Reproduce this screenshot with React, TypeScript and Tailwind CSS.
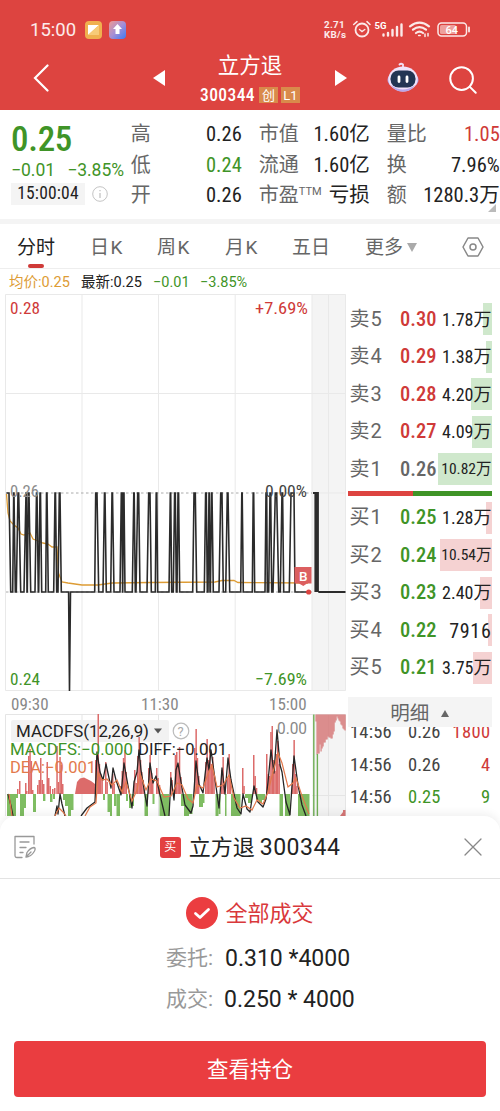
import React from "react";
import { Search } from "lucide-react";

type Tone = "red" | "green" | "gray" | "dark";

const tones: Record<Tone, string> = {
  red: "text-[#cf3a38]",
  green: "text-[#3f9427]",
  gray: "text-[#666]",
  dark: "text-[#222]",
};

const TOP = 493;
const BASE = 592;

// [base start, top start, top end, base end]
const spikes = [
  [12.7, 13.7, 14, 15.3], [16.3, 18, 18.7, 20.7], [24, 26, 26.3, 27],
  [27.3, 28.3, 29, 30.7], [35, 36.5, 37, 38.3], [38.7, 40, 40.5, 41.7],
  [45.7, 46.5, 47, 48.3], [53.7, 55, 55.5, 56.7], [58, 59.3, 60, 61.3],
];
const laterSpikes = [
  [94.7, 95.7, 97, 98.7], [103, 104.5, 105, 106.3], [110.7, 112, 112.5, 114],
  [120, 121.3, 122, 122.6], [122.7, 123.5, 124, 125], [132.3, 133.8, 134.2, 135.3],
  [136, 137.7, 138.7, 140], [147, 148.7, 150, 151.3], [155.3, 156.2, 156.8, 157.7],
  [169, 170.3, 170.7, 171.7], [173.3, 174.6, 175.3, 176.3], [177, 178, 178.6, 179.7],
  [192.7, 194, 195.3, 196.7], [204.3, 205.6, 206.3, 207.3], [208, 209, 209.3, 210],
  [210.4, 211.5, 212, 213.3], [219, 220.7, 222, 223.3], [225.7, 227.3, 228, 229.7],
  [240.7, 241.8, 242.2, 243.3], [252.3, 253.2, 253.7, 254.7], [265, 266, 266.7, 267.3],
  [268.7, 270, 270.7, 271.7], [273, 275.3, 276.7, 278.7], [280.3, 282, 282.6, 283.7],
  [289.3, 291, 294, 295],
];

const toPath = (list: number[][]) =>
  list.map(([a, b, c, d]) => `L${a} ${BASE}L${b} ${TOP}L${c} ${TOP}L${d} ${BASE}`).join("");

const pricePath =
  `M6.5 ${TOP}L9 ${TOP}L10.7 ${BASE}` +
  toPath(spikes) +
  `L68.6 ${BASE}L69.5 691L70.5 ${BASE}` +
  toPath(laterSpikes) +
  `L308 ${BASE}`;

function ChartText({ x, y, w, size = 17, fill, children }: {
  x: number; y: number; w: number; size?: number; fill: string; children: React.ReactNode;
}) {
  return (
    <text x={x} y={y} textLength={w} lengthAdjust="spacingAndGlyphs" fontSize={size} fill={fill}>
      {children}
    </text>
  );
}

function PriceChart() {
  return (
    <svg viewBox="0 294 346 397" className="block h-[397px] w-[346px]">
      <rect x="312" y="294" width="33.5" height="397" fill="#f4f4f4" />
      <g stroke="#e9e9e9" strokeWidth="1" fill="none">
        <path d="M5.5 294.5H345.5V690.5H5.5ZM82 294V691M158.5 294V691M235.2 294V691M312 294V691M328.5 294V691M6 393.5H345M312 493H345" />
      </g>
      <path d="M6 493H312M6 592H312" stroke="#aaa" strokeDasharray="2.5 2.5" />
      <ChartText x={10} y={314} w={30} fill="#cf3a38">0.28</ChartText>
      <ChartText x={255} y={314} w={53} fill="#cf3a38">+7.69%</ChartText>
      <ChartText x={10} y={685} w={30} fill="#3f9427">0.24</ChartText>
      <ChartText x={255} y={685} w={52} fill="#3f9427">−7.69%</ChartText>
      <path
        d="M6.5 494L8 513L10 521L14 525L18 528L21 534L24 535L30 533L33 539L38 541L43 543L48 544L52 547H57L58.5 573L62 582L68 583L82 585L98 585L112 583L150 582.5L215 582L222 580.5L234 580.5L238 582.5L308 583"
        fill="none"
        stroke="#dd9c35"
        strokeWidth="1.3"
      />
      <path d={pricePath} fill="none" stroke="#2b2b2b" strokeWidth="1.6" />
      <path d="M313 493H318V592M315.3 493V592M316.8 493V592M318.3 592H345.5" fill="none" stroke="#2b2b2b" strokeWidth="1.8" />
      <ChartText x={10} y={497} w={29} fill="#8c8c8c">0.26</ChartText>
      <ChartText x={265} y={497} w={42} fill="#444">0.00%</ChartText>
      <path d="M295 567H311.5V583.5H307L303.3 586L299 583.5H294.5V567Z" fill="#dc5f60" />
      <text x="299" y="580.5" fontSize="13.5" fontWeight="500" fill="#fff" className="[font-stretch:100%]">B</text>
      <circle cx="308.7" cy="592" r="2.6" fill="#dd4440" />
    </svg>
  );
}

// [x, height] pairs measured from the zero line
const redBars = [
  [17, 5], [19, 13], [25, 11], [26, 3], [28, 38], [29.3, 45], [30.6, 33], [32, 4], [37, 9],
  [38.5, 14], [40, 36], [41.5, 14], [43, 10], [46.5, 32], [48, 16], [49.5, 8], [52, 5], [54, 6],
  [56.3, 48], [57.7, 12], [59.3, 37], [60.6, 29], [62, 10], [95, 34], [96.3, 38], [97.5, 80], [98.7, 30],
  [100, 20], [101.4, 14], [105, 32], [106.4, 12], [112, 20], [113.4, 10], [120, 8], [121.5, 23], [122.8, 36],
  [124.2, 44], [125.5, 22], [134, 24], [135.4, 11], [137, 38], [138.4, 57], [139.8, 34], [141, 22], [142.4, 14],
  [148, 26], [149.4, 39], [150.8, 21], [152, 13], [156, 26], [157.4, 16], [158.8, 9], [170, 22],
  [171.4, 14], [174.7, 39], [176, 42], [177.4, 27], [178.8, 47], [180.2, 17], [194, 46], [195.4, 65], [196.7, 36],
  [198, 18], [205, 32], [206.4, 55], [207.8, 34], [209.2, 45], [210.5, 30], [212, 37], [213.3, 20], [221, 24],
  [222.4, 37], [223.8, 12], [227, 16], [228.4, 40], [229.8, 15], [242, 26], [243.3, 8], [253, 39],
  [254.4, 18], [255.8, 6], [266, 40], [267.4, 20], [268.8, 18], [270.2, 62], [271.5, 68], [272.9, 34],
  [274.3, 23], [275.7, 40], [277, 53], [278.4, 30], [292, 30], [293.4, 54], [294.8, 20], [296.2, 8],
];
// [x, width, depth] below the zero line
const greenBars = [
  [7, 9, 24], [16, 2, 4], [20, 4, 28], [24, 2, 14], [33, 3, 18], [43, 2.4, 7], [50, 2.5, 8], [53, 2, 5],
  [63, 2, 6], [65, 3, 12], [68, 3, 24], [71, 2.5, 16], [103, 2, 6], [107.5, 2.5, 18], [110, 2, 24],
  [114, 2.5, 12], [116.5, 3.5, 26], [126, 2, 7], [129, 2.5, 14], [132, 2, 12], [144.5, 3.5, 26],
  [152.5, 2, 10], [159.5, 5.5, 24], [165, 4, 26], [181, 3, 12], [184, 5, 26], [189, 3.5, 20],
  [199, 4, 13], [203, 1.5, 9], [215.5, 3, 25], [218.5, 2, 20], [225, 1.5, 26], [231, 9.5, 26],
  [245, 3, 4], [248, 4, 9], [256, 3, 6], [259, 3, 9], [262, 3, 6], [279.5, 3.5, 26], [285, 5, 26],
  [298, 4, 25], [302, 7.5, 26],
];
const afterBars = [
  7, 40, 39, 39, 30, 37, 34, 32, 28, 28, 25, 25, 22, 23, 23, 24, 24, 20, 17, 8, 6, 2, 4, 6, 7, 10, 11, 14, 15, 16,
];

function MacdChart() {
  return (
    <svg viewBox="0 714 346 102" className="block h-[102px] w-[346px] [font-stretch:100%]">
      <rect x="312" y="714" width="33.5" height="102" fill="#f4f4f4" />
      <path d="M5.5 816V714.5H345.5V816M82 714V816M158.5 714V816M235.2 714V816M328.5 714V816M312 795.5H345" fill="none" stroke="#e5e5e5" />
      <rect x="11" y="720" width="158" height="22" rx="2" fill="#f2f2f2" />
      <circle cx="181" cy="731" r="7.8" fill="none" stroke="#bbb" strokeWidth="1.2" />
      <text x="177.6" y="735.5" fontSize="13" fill="#aaa">?</text>
      {redBars.map(([x, h]) => (
        <rect key={x} x={x} y={794 - h} width="1.5" height={h} fill="#dc6b6a" />
      ))}
      <path d="M75 794L77 782L80 778.5L84 777.5L91 781L95 784V794Z" fill="#dc6b6a" />
      {greenBars.map(([x, w, h]) => (
        <rect key={x} x={x} y="794" width={w} height={h} fill="#7fbd62" />
      ))}
      {afterBars.map((h, i) => (
        <rect key={i} x={315.5 + i} y="714.5" width="1.1" height={h} fill="#d57575" />
      ))}
      <path d="M313.8 714.5V816M317.4 754V816" stroke="#6fae54" strokeWidth="1.4" />
      <path d="M340 816L343 812V810H345.5V816Z" fill="#d57575" />
      <path
        d="M8 794L11 806L13 816M55 816L57 806L58 814L60 794L62 804L65 816M81 816L87 808L95 802L97 752L100 772L103 780L106 764L109 778L111 788L113 768L116 780L121 795L124 763L127 780L132 808L134 782L137 772L139 750L141 770L145 795L147 806L150 763L153 783L156 776L160 795L165 816M169 816L171 778L174 800L176 770L178 763L181 782L185 805L191 813L193 806L196 761L199 784L203 793L205 775L207 758L209 770L211 750L214 772L219 808L222 768L225 794L228 758L231 780L237 808L241 814L243 794L247 809L250 812L254 786L258 802L263 807L266 799L268 782L271 750L274 773L277 730L280 765L282 772L286 802L290 815L294 756L298 785L302 805L306 816"
        fill="none"
        stroke="#252525"
        strokeWidth="1.3"
        strokeLinejoin="round"
      />
      <path
        d="M9 794L12 816M55 816L59 808L63 812L66 816M85 816L90 807L96 803L98 773L102 780L107 779L112 785L117 780L122 792L126 782L132 801L137 790L140 774L146 790L151 779L157 781L164 797L171 796L177 783L182 785L188 799L193 803L197 785L203 788L208 774L212 765L217 787L223 785L229 775L234 798L240 808L246 806L252 810L257 800L263 804L268 792L272 776L278 753L282 763L288 787L293 783L296 778L302 796L309 814"
        fill="none"
        stroke="#e3794c"
        strokeWidth="1.2"
      />
      <ChartText x={16} y={737} w={133} size={17} fill="#222">MACDFS(12,26,9)</ChartText>
      <path d="M154 728.5H162L158 733.5Z" fill="#555" />
      <ChartText x={10} y={754.5} w={123} size={16.5} fill="#3f9427">MACDFS:−0.000</ChartText>
      <ChartText x={138} y={754.5} w={89} size={16.5} fill="#222">DIFF:−0.001</ChartText>
      <ChartText x={10} y={773} w={86} size={16.5} fill="#e3794c">DEA:−0.001</ChartText>
      <ChartText x={277} y={734} w={30} size={17} fill="#888">0.00</ChartText>
    </svg>
  );
}

const quotes: { label: string; sup?: string; value: string; tone: Tone }[] = [
  { label: "高", value: "0.26", tone: "dark" },
  { label: "市值", value: "1.60亿", tone: "dark" },
  { label: "量比", value: "1.05", tone: "red" },
  { label: "低", value: "0.24", tone: "green" },
  { label: "流通", value: "1.60亿", tone: "dark" },
  { label: "换", value: "7.96%", tone: "dark" },
  { label: "开", value: "0.26", tone: "dark" },
  { label: "市盈", sup: "TTM", value: "亏损", tone: "dark" },
  { label: "额", value: "1280.3万", tone: "dark" },
];

type Level = { label: string; price: string; tone: Tone; volume: string; bar: number; small?: boolean };

const asks: Level[] = [
  { label: "卖5", price: "0.30", tone: "red", volume: "1.78万", bar: 9 },
  { label: "卖4", price: "0.29", tone: "red", volume: "1.38万", bar: 6 },
  { label: "卖3", price: "0.28", tone: "red", volume: "4.20万", bar: 21 },
  { label: "卖2", price: "0.27", tone: "red", volume: "4.09万", bar: 20 },
  { label: "卖1", price: "0.26", tone: "gray", volume: "10.82万", bar: 54, small: true },
];
const bids: Level[] = [
  { label: "买1", price: "0.25", tone: "green", volume: "1.28万", bar: 6 },
  { label: "买2", price: "0.24", tone: "green", volume: "10.54万", bar: 52, small: true },
  { label: "买3", price: "0.23", tone: "green", volume: "2.40万", bar: 12 },
  { label: "买4", price: "0.22", tone: "green", volume: "7916", bar: 4 },
  { label: "买5", price: "0.21", tone: "green", volume: "3.75万", bar: 19 },
];

function LevelRow({ level, barColor }: { level: Level; barColor: string }) {
  return (
    <div className="relative flex h-[37.5px] items-center whitespace-nowrap">
      <div className={`absolute top-[3px] right-0 h-8 ${barColor}`} style={{ width: level.bar }} />
      <span className="relative w-[52px] pl-[1.5px] text-[20px] tracking-[1px] text-[#666] [font-stretch:100%]">{level.label}</span>
      <span className={`relative text-[20.5px] font-medium ${tones[level.tone]}`}>{level.price}</span>
      <span className={`relative ml-auto pt-0.5 text-[#222] ${level.small ? "text-[15.5px]" : level.volume === "7916" ? "text-[20px] tracking-[0.7px]" : "text-[18px]"}`}>
        {level.volume}
      </span>
    </div>
  );
}

function StatusBar() {
  return (
    <div className="flex h-[45px] items-center pt-[15px] pl-[30px] text-white/90 [font-stretch:100%]">
      <span className="w-[55px] text-[18.5px]">15:00</span>
      <svg viewBox="0 0 42 18" className="h-[18px] w-[42px]">
        <defs>
          <linearGradient id="up" x1="0" y1="0" x2="1" y2="1">
            <stop offset="0" stopColor="#ef9a91" />
            <stop offset="0.5" stopColor="#a68fd5" />
            <stop offset="1" stopColor="#397bf4" />
          </linearGradient>
        </defs>
        <rect x="0" y="0" width="17" height="18" rx="4" fill="#f0b04f" />
        <path d="M3 4H14L3 14Z" fill="#fff" />
        <path d="M14 4V14H3Z" fill="#f7cb78" />
        <rect x="24" y="0" width="17" height="18" rx="4" fill="url(#up)" />
        <path d="M32.5 3L37 8H34.5V13H30.5V8H28Z" fill="#fff" />
      </svg>
      <div className="ml-[197px] w-[28px] text-[9.8px] leading-[10px] font-bold tracking-[0.3px] whitespace-nowrap">
        2.71
        <br />
        KB/s
      </div>
      <svg viewBox="352 18 120 24" className="h-6 w-[120px]" fill="none" stroke="#fbe9e8" strokeLinecap="round">
        <circle cx="362" cy="30" r="6.5" strokeWidth="1.8" />
        <path d="M359.5 29.5L362 31.5L364.8 29.5" strokeWidth="1.4" />
        <path d="M353.7 24.5L357 21.7M370 24.5L367 21.7" strokeWidth="1.6" />
        <path d="M383.5 34.5V35.5M388 33V35.5M392.5 30V35.5M397 27V35.5M401.5 24.5V35.5" strokeWidth="2.4" />
        <path d="M410 26.3Q419.5 19 429 26.3M413 29.7Q419.5 24.6 426 29.7M416 33Q419.5 30.3 423 33" strokeWidth="2.2" />
        <path d="M418.6 35.5H420.2M425 34V36.5M428 33.5V36" strokeWidth="1.5" />
        <rect x="438" y="23" width="28.5" height="13" rx="3.5" strokeWidth="1.5" />
        <rect x="440" y="25" width="16" height="9" rx="1.5" fill="#eea09c" stroke="none" />
        <path d="M469 27.5V31.5" strokeWidth="1.8" />
        <text x="445.5" y="33.6" fontSize="11" fontWeight="500" fill="#fff" stroke="none">64</text>
        <text x="374.5" y="28.5" fontSize="9.5" fontWeight="700" fill="#fff" stroke="none">5G</text>
      </svg>
    </div>
  );
}

function RobotIcon() {
  return (
    <svg viewBox="0 0 34 32" className="h-8 w-[34px]">
      <path d="M17 6V2.5Q15 1 13.5 2.5" fill="none" stroke="#f2def3" strokeWidth="1.8" strokeLinecap="round" />
      <rect x="1.5" y="12" width="31" height="12" rx="6" fill="#b6a4ea" />
      <ellipse cx="17" cy="17" rx="14.7" ry="12.5" fill="#f1e3fa" />
      <path d="M5 23Q17 32 29 23Q25.5 29.5 17 29.8Q8.5 29.5 5 23Z" fill="#b9a7ea" />
      <rect x="4.5" y="8.5" width="25" height="17" rx="8" fill="#233553" />
      <path d="M13 15V19.5M21 15V19.5" stroke="#fff" strokeWidth="2.8" strokeLinecap="round" />
    </svg>
  );
}

function Header() {
  return (
    <header className="h-[110px] bg-[#dd4440] text-white">
      <StatusBar />
      <div className="flex h-[65px] items-center">
        <div className="flex w-[150px] items-center pl-[33px]">
          <svg viewBox="0 0 17 28" className="h-7 w-[17px]" fill="none" stroke="#fff" strokeWidth="2.2" strokeLinecap="round">
            <path d="M14.5 1.5L2 14L14.5 26.5" />
          </svg>
        </div>
        <div className="w-[18px] pl-[3px]">
          <svg viewBox="0 0 12 16" className="h-4 w-3 fill-white"><path d="M12 0V16L0 8Z" /></svg>
        </div>
        <div className="flex w-[167px] flex-col items-center pt-[5px] pr-[3px]">
          <div className="text-[21.5px] leading-[30px]">立方退</div>
          <div className="flex h-[28px] items-center gap-[3px]">
            <span className="pt-px pr-px text-[17.5px] font-medium tracking-[0.4px]">300344</span>
            <span className="flex h-4 w-[19px] items-center justify-center bg-[#d98a4b] text-[13px]">创</span>
            <span className="flex h-4 w-[19px] items-center justify-center bg-[#d98a4b] text-[13px] [font-stretch:100%]">L1</span>
          </div>
        </div>
        <svg viewBox="0 0 12 16" className="h-4 w-3 fill-white"><path d="M0 0V16L12 8Z" /></svg>
        <div className="ml-[39px]"><RobotIcon /></div>
        <Search className="mt-1 ml-[26px] h-[34px] w-[34px]" strokeWidth={1.4} />
      </div>
    </header>
  );
}

function QuotePanel() {
  return (
    <section className="relative flex h-[109px] whitespace-nowrap">
      <div className="w-[131px] pt-[13px] pl-[11px] text-[#3f9427]">
        <div className="text-[35px] leading-[34px] font-medium tracking-[-0.3px]">0.25</div>
        <div className="flex h-[26px] items-center gap-[12px] pt-px text-[17.5px] [font-stretch:88%]">
          <span>−0.01</span>
          <span>−3.85%</span>
        </div>
        <div className="flex items-center gap-[7px]">
          <span className="flex h-[22px] w-[74px] items-center justify-center bg-[#f4f4f4] text-[17.5px] tracking-[0.2px] text-[#222]">15:00:04</span>
          <svg viewBox="0 0 16 16" className="h-4 w-4" fill="none" stroke="#c4c4c4">
            <circle cx="8" cy="8" r="7.3" />
            <path d="M8 7V12M8 4V5.2" strokeWidth="1.3" />
          </svg>
        </div>
      </div>
      <div className="grid h-[92px] w-[370px] grid-cols-[111px_111px_113px] gap-x-[17px] pt-[9px]">
        {quotes.map((q) => (
          <div key={q.label} className="flex h-[30.5px] items-center justify-between">
            <span className="flex text-[20px] text-[#666]">
              {q.label}
              {q.sup && <sup className="top-0 pt-[7px] text-[11px] [font-stretch:100%]">{q.sup}</sup>}
            </span>
            <span className={`text-[20.5px] ${tones[q.tone]}`}>{q.value}</span>
          </div>
        ))}
      </div>
      <svg viewBox="0 0 8 8" className="absolute right-[4px] bottom-[7px] h-2 w-2 fill-[#bbb]"><path d="M8 0V8H0Z" /></svg>
    </section>
  );
}

function Tabs() {
  return (
    <nav className="flex h-[50px] items-center border-t-[5px] border-b border-t-[#f4f4f4] border-b-[#eee] pt-[2px] pl-[17px] text-[19px] whitespace-nowrap text-[#666] [font-stretch:100%]">
      <div className="relative w-[73px] text-[#222]">
        分时
        <span className="absolute -bottom-[11px] left-[11px] h-1 w-4 rounded-full bg-[#cf3a38]" />
      </div>
      <span className="w-[67px] tracking-[1.5px]">日K</span>
      <span className="w-[68px] tracking-[1.5px]">周K</span>
      <span className="w-[67px] tracking-[1.5px]">月K</span>
      <span className="w-[73px]">五日</span>
      <span>更多</span>
      <svg viewBox="0 0 10 9" className="ml-1 h-[9px] w-[10px] fill-[#aaa]"><path d="M0 0H10L5 9Z" /></svg>
      <svg viewBox="0 0 22 20" className="ml-auto mr-[16px] h-5 w-[22px]" fill="none" stroke="#888" strokeWidth="1.5">
        <path d="M6 1H16L21 10L16 19H6L1 10Z" strokeLinejoin="round" />
        <circle cx="11" cy="10" r="3" />
      </svg>
    </nav>
  );
}

const trades: [string, Tone, string, Tone][] = [
  ["0.26", "dark", "1800", "red"],
  ["0.26", "dark", "4", "red"],
  ["0.25", "green", "9", "green"],
];

function OrderBook() {
  return (
    <aside className="ml-[2px] h-[522px] w-[143.5px] overflow-hidden pt-[6px]">
      {asks.map((l) => <LevelRow key={l.label} level={l} barColor="bg-[#cfe8cc]" />)}
      <div className="mt-[3px] mb-[3px] flex h-[5px]">
        <div className="w-[65px] bg-[#dd4440]" />
        <div className="flex-1 bg-[#3f9427]" />
      </div>
      {bids.map((l) => <LevelRow key={l.label} level={l} barColor="bg-[#f5d2d2]" />)}
      <div className="relative z-10 mt-[11px] flex h-[30px] items-center justify-center gap-3 bg-[#f4f4f4] pt-[3px] text-[19.5px] text-[#666]">
        明细
        <svg viewBox="0 0 8 7" className="h-[7px] w-2 fill-[#666]"><path d="M4 0L8 7H0Z" /></svg>
      </div>
      <div className="-mt-[11px]">
        {trades.map(([price, priceTone, size, sizeTone], i) => (
          <div key={i} className="flex h-[32.5px] items-center pl-[2px] text-[18.5px]">
            <span className="w-[58px] tracking-[0.2px] text-[#444]">14:56</span>
            <span className={priceTone === "dark" ? "text-[#444]" : tones[priceTone]}>{price}</span>
            <span className={`ml-auto pr-px tracking-[0.4px] ${tones[sizeTone]}`}>{size}</span>
          </div>
        ))}
      </div>
    </aside>
  );
}

function TradeSheet() {
  return (
    <section className="relative h-[295px] rounded-t-2xl bg-white shadow-[0_-3px_8px_rgba(0,0,0,0.06)]">
      <div className="flex h-[63px] items-center justify-between border-b border-[#e3e3e3] pr-[18px] pl-[14px]">
        <svg viewBox="0 0 22 24" className="h-6 w-[22px]" fill="none" stroke="#999" strokeWidth="1.3" strokeLinecap="round" strokeLinejoin="round">
          <path d="M8 22.5H3Q1 22.5 1 20.5V1.5H20V9M6 7H15M6 12.5H12M6 17.5H9" />
          <path d="M12 22L13 17.5Q16 13 20 12.5Q22 13 20.5 16Q18 20.5 14.5 21.5ZM12 22L17 17" />
        </svg>
        <div className="flex items-center gap-2 text-[22px] text-[#222]">
          <span className="flex h-[21px] w-[21px] items-center justify-center rounded-[3px] bg-[#e33f41] text-[12px] text-white">买</span>
          <span className="whitespace-pre">立方退 <span className="text-[23px] tracking-[0.5px] [font-stretch:92%]">300344</span></span>
        </div>
        <svg viewBox="0 0 18 18" className="h-[18px] w-[18px]" stroke="#888" strokeWidth="1.3" strokeLinecap="round">
          <path d="M1 1L17 17M17 1L1 17" />
        </svg>
      </div>
      <div className="flex items-center justify-center gap-[7px] pt-[18px]">
        <svg viewBox="0 0 32 32" className="h-8 w-8">
          <circle cx="16" cy="16" r="16" fill="#eb3d40" />
          <path d="M9.5 16.5L14 20.5L22.5 12.5" fill="none" stroke="#fff" strokeWidth="2.8" strokeLinecap="round" strokeLinejoin="round" />
        </svg>
        <span className="pt-px text-[22px] leading-[31px] text-[#d9393c]">全部成交</span>
      </div>
      <div className="pt-[9px] pl-[166px] text-[23px] whitespace-nowrap text-[#222] [font-stretch:100%]">
        <div className="flex h-[41px] items-center">
          <span className="w-[59px] text-[21px] text-[#999]">委托:</span>0.310 *4000
        </div>
        <div className="flex h-[41px] items-center">
          <span className="w-[58px] text-[21px] text-[#999]">成交:</span>0.250 * 4000
        </div>
      </div>
      <button className="mx-[14px] mt-[21px] flex h-[56px] w-[472px] items-center justify-center rounded bg-[#ea3d40] pt-0.5 text-[21.5px] text-white">
        查看持仓
      </button>
    </section>
  );
}

export default function App() {
  return (
    <div className="h-[1111px] w-[500px] overflow-hidden bg-white font-['Roboto','Noto_Sans_CJK_SC',sans-serif] leading-none [font-stretch:85%]">
      <Header />
      <QuotePanel />
      <Tabs />
      <div className="flex h-[25px] items-center pt-[4px] pl-[9px] text-[14.5px] whitespace-nowrap text-[#3f9427] [font-stretch:93%]">
        <span className="w-[72px] text-[#dd9c35]">均价:0.25</span>
        <span className="w-[72px] text-[#222]">最新:0.25</span>
        <span className="w-[47px]">−0.01</span>
        <span>−3.85%</span>
      </div>
      <main className="flex h-[522px]">
        <div className="w-[346px]">
          <PriceChart />
          <div className="flex h-[23px] items-center pt-[3px] pl-[11px] text-[17px] text-[#888]">
            <span className="w-[130px]">09:30</span>
            <span className="w-[128px]">11:30</span>
            <span>15:00</span>
          </div>
          <MacdChart />
        </div>
        <OrderBook />
      </main>
      <TradeSheet />
    </div>
  );
}
